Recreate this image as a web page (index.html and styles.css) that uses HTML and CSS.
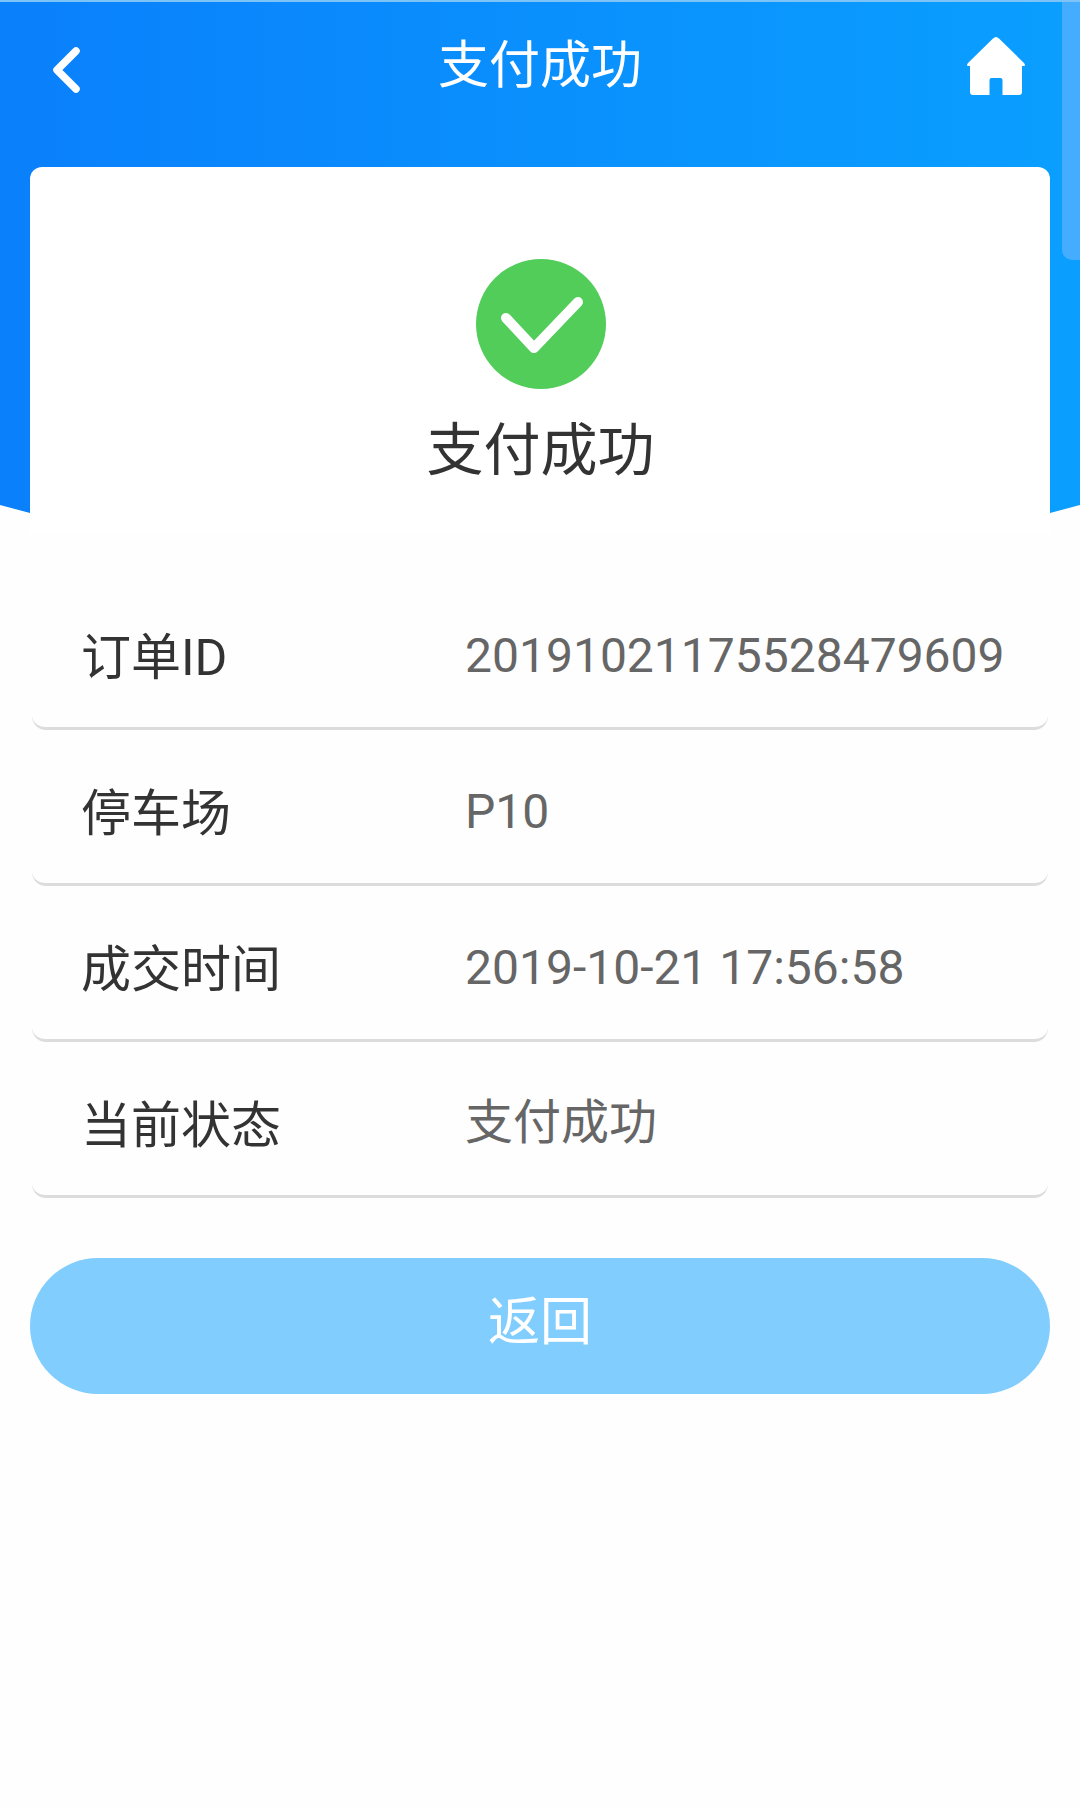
FILE: index.html
```html
<!DOCTYPE html>
<html lang="zh-CN">
  <head>
    <meta charset="UTF-8" />
    <meta name="viewport" content="width=device-width, initial-scale=1.0" />
    <title>支付成功</title>
    <link rel="stylesheet" href="styles.css">
  </head>
  <body>
    <div class="hero">
      <div class="scroll-thumb"></div>
      <div class="topbar">
        <svg class="icon-back" viewBox="0 0 30 48">
          <path d="M25 5 L6 24 L25 43" fill="none" stroke="#fff" stroke-width="7.500" stroke-linecap="round" stroke-linejoin="round" />
        </svg>
        <h1 class="topbar-title">支付成功</h1>
        <svg class="icon-home" viewBox="0 0 60 60">
          <path d="M30 1 Q31.500 1 33 2.500 L58 27 Q60 29.500 58 30 L56 30 L56 56 Q56 59 53 59 L36.500 59 L36.500 44 Q36.500 42 34.500 42 L25.500 42 Q23.500 42 23.500 44 L23.500 59 L7 59 Q4 59 4 56 L4 30 L2 30 Q0 29.500 2 27 L27 2.500 Q28.500 1 30 1 Z" fill="#fff" />
        </svg>
      </div>
      <div class="card">
        <svg class="icon-ok" viewBox="0 0 130 130">
          <circle cx="65" cy="65" r="65" fill="#52cd5a" />
          <path d="M30 59 L58 89 L102 43" fill="none" stroke="#fff" stroke-width="10" stroke-linecap="round" stroke-linejoin="round" />
        </svg>
        <h2 class="card-title">支付成功</h2>
      </div>
    </div>

    <div class="info-list">
      <div class="info-row">
        <span class="info-label">订单ID</span>
        <span class="info-value info-num">20191021175528479609</span>
      </div>
      <div class="info-row">
        <span class="info-label">停车场</span>
        <span class="info-value info-num">P10</span>
      </div>
      <div class="info-row">
        <span class="info-label">成交时间</span>
        <span class="info-value info-num">2019-10-21 17:56:58</span>
      </div>
      <div class="info-row">
        <span class="info-label">当前状态</span>
        <span class="info-value">支付成功</span>
      </div>
    </div>

    <button class="back-btn">返回</button>
  </body>
</html>
```

FILE: styles.css
```css
* {
  box-sizing: border-box;
}

body {
  margin: 0;
  min-height: 1809px;
  background: #fefefe;
  font-family: Roboto, "Noto Sans CJK SC", sans-serif;
}

/* blue header, the card sits inside it */
.hero {
  position: relative;
  height: 533px;
  padding: 0 30px;
  border-top: 2px solid #7cc3f7;
  background: linear-gradient(90deg, #0a80fb, #0a9fff);
  clip-path: polygon(0 0, 100% 0, 100% 505px, 1050px 513px, 1050px 100%, 30px 100%, 30px 513px, 0 505px);
}

.scroll-thumb {
  position: absolute;
  top: 0;
  right: 0;
  width: 18px;
  height: 258px;
  border-bottom-left-radius: 10px;
  background: #45adff;
}

.topbar {
  display: grid;
  grid-template-columns: 1fr auto 1fr;
  align-items: center;
  height: 165px;
  padding: 0 24px 38px;
}

.icon-back {
  width: 30px;
  height: 48px;
  margin: 8px 0 0 -3px;
}

.topbar-title {
  margin: 0;
  color: #fff;
  font-size: 51px;
  font-weight: 400;
  line-height: 60px;
}

.icon-home {
  justify-self: end;
  width: 60px;
  height: 60px;
  margin-top: 0;
}

.card {
  display: flex;
  flex-direction: column;
  align-items: center;
  height: 366px;
  padding: 92px 0 0 1px;
  border-radius: 12px 12px 0 0;
  background: #fff;
}

.icon-ok {
  width: 130px;
  height: 130px;
}

.card-title {
  margin: 26px 0 0;
  color: #333;
  font-size: 57px;
  font-weight: 400;
  line-height: 72px;
}

.info-list {
  margin-top: 41px;
  padding: 0 32px;
}

.info-row {
  display: grid;
  grid-template-columns: 384px 1fr;
  align-items: center;
  height: 156px;
  padding: 4px 0 0 49px;
  border-bottom: 3px solid #dcdcdc;
  border-radius: 0 0 14px 14px;
}

.info-label {
  color: #333;
  font-size: 50px;
}

.info-value {
  padding-bottom: 6px;
  color: #666;
  font-size: 48px;
}

/* latin and digits sit lower than the chinese text here */
.info-num {
  padding: 5px 0 0;
}

.back-btn {
  display: block;
  width: 1020px;
  height: 136px;
  margin: 60px 30px 0;
  padding: 0 0 18px;
  border: none;
  border-radius: 68px;
  background: #81cdfd;
  color: #fff;
  font-family: inherit;
  font-size: 52px;
}
```
